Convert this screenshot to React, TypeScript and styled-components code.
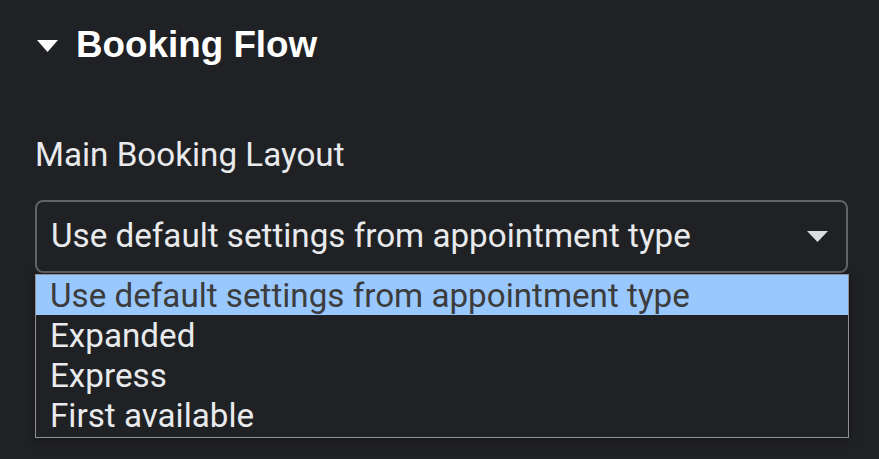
import React from "react";
import styled, { createGlobalStyle } from "styled-components";

const Global = createGlobalStyle`
  html, body { margin: 0; padding: 0; background: #202124; }
  body { font-family: Roboto, "Noto Sans", sans-serif; }
`;

const Page = styled.div`
  width: 879px;
  height: 459px;
  box-sizing: border-box;
  padding: 23px 31px 0 35px;
  background: #202124;
  overflow: hidden;
`;

const Heading = styled.h2`
  margin: 0;
  display: flex;
  align-items: center;
  gap: 18px;
  font-family: "Liberation Sans", Arial, sans-serif;
  font-weight: 700;
  font-size: 36.8px;
  line-height: 43px;
  color: #ffffff;
`;

const Caret = styled.svg`
  display: block;
  flex: none;
  margin-left: 2px;
  margin-top: 2px;
`;

const Label = styled.div`
  margin-top: 70px;
  font-size: 33.2px;
  line-height: 38px;
  color: #e8eaed;
`;

const SelectWrap = styled.div`
  position: relative;
  margin-top: 26px;
`;

const SelectBox = styled.div`
  box-sizing: border-box;
  height: 73px;
  border: 2px solid #5f6368;
  border-radius: 8px;
  padding: 0 18px 0 14px;
  display: flex;
  align-items: center;
  justify-content: space-between;
  font-size: 33.2px;
  color: #e8eaed;
`;

const SelectText = styled.span`
  line-height: 38px;
  margin-top: -2px;
`;

const List = styled.ul`
  position: absolute;
  left: 0;
  right: -1px;
  top: calc(100% + 1px);
  margin: 0;
  padding: 0 0 2px;
  list-style: none;
  border: 1px solid #8f9092;
  background: #202124;
  box-shadow: 0 2px 8px rgba(0, 0, 0, 0.35);
`;

const Option = styled.li<{ $active?: boolean }>`
  height: 40px;
  padding: 1px 0 0 14px;
  box-sizing: border-box;
  display: flex;
  align-items: center;
  font-size: 33.2px;
  line-height: 38px;
  color: ${(p) => (p.$active ? "#3c3c3c" : "#e8eaed")};
  background: ${(p) => (p.$active ? "#99c8ff" : "transparent")};
`;

const options = [
  "Use default settings from appointment type",
  "Expanded",
  "Express",
  "First available",
];

export default function App() {
  return (
    <Page>
      <Global />
      <Heading>
        <Caret width="21" height="12" viewBox="0 0 21 12">
          <path d="M0 0 H21 L10.5 12 Z" fill="#ffffff" />
        </Caret>
        Booking Flow
      </Heading>
      <Label>Main Booking Layout</Label>
      <SelectWrap>
        <SelectBox>
          <SelectText>{options[0]}</SelectText>
          <svg width="21" height="11" viewBox="0 0 21 11">
            <path d="M0 0 H21 L10.5 11 Z" fill="#dadce0" />
          </svg>
        </SelectBox>
        <List>
          {options.map((o, i) => (
            <Option key={o} $active={i === 0}>
              {o}
            </Option>
          ))}
        </List>
      </SelectWrap>
    </Page>
  );
}
